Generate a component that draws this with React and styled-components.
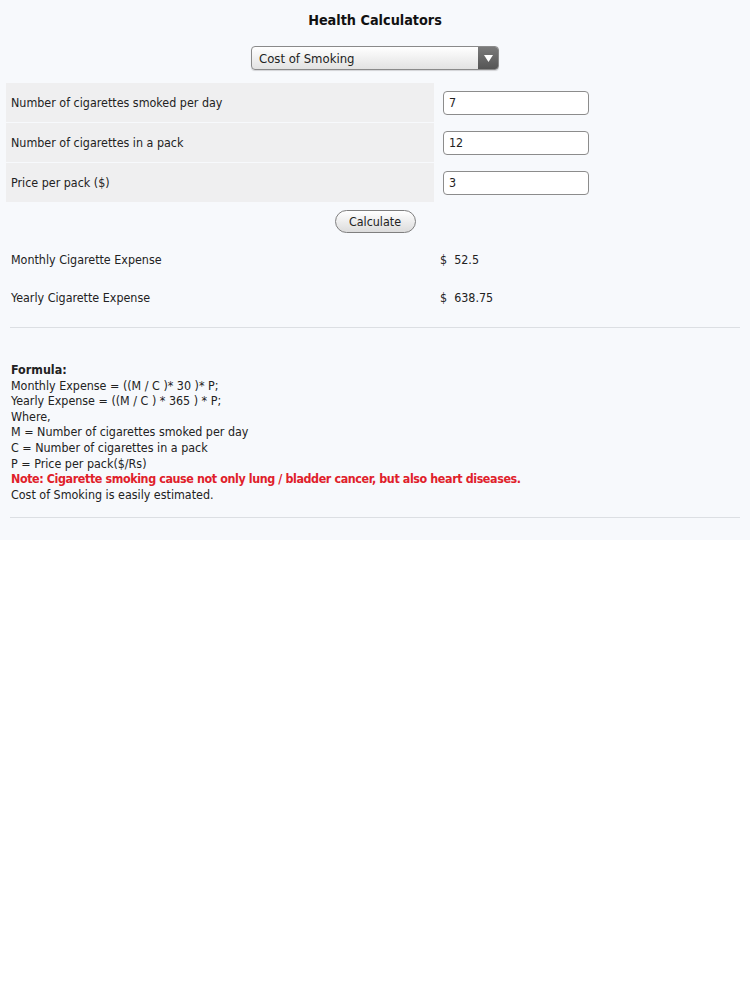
import React from "react";
import styled, { createGlobalStyle } from "styled-components";

const GlobalStyle = createGlobalStyle`
  html, body {
    margin: 0;
    padding: 0;
    background: #ffffff;
  }
  body {
    font-family: "DejaVu Sans Condensed", "DejaVu Sans", sans-serif;
    color: #222;
  }
`;

const Page = styled.div`
  background: #f7f9fc;
  padding: 10px 6px 22px 6px;
`;

const Title = styled.h1`
  margin: 0;
  text-align: center;
  font-size: 14.3px;
  font-weight: bold;
  color: #111;
  line-height: 20px;
`;

const SelectRow = styled.div`
  display: flex;
  justify-content: center;
  margin-top: 16px;
  margin-bottom: 13px;
`;

const SelectBox = styled.div`
  width: 248px;
  height: 24px;
  box-sizing: border-box;
  display: flex;
  align-items: stretch;
  border: 1px solid #8a8a8a;
  border-radius: 4px;
  overflow: hidden;
  background: linear-gradient(#ffffff, #e2e2e2);
  box-shadow: 0 1px 1px rgba(0, 0, 0, 0.15);
`;

const SelectText = styled.div`
  flex: 1;
  display: flex;
  align-items: center;
  padding-left: 7px;
  font-size: 13px;
  color: #222;
`;

const SelectArrow = styled.div`
  width: 20px;
  background: linear-gradient(#7a7a7a, #555);
  display: flex;
  align-items: center;
  justify-content: center;
`;

const Table = styled.div`
  display: flex;
  flex-direction: column;
  gap: 1px;
`;

const Row = styled.div`
  display: grid;
  grid-template-columns: 428px 1fr;
  height: 39px;
`;

const LabelCell = styled.div`
  background: #efeff0;
  display: flex;
  align-items: center;
  padding-left: 5px;
  font-size: 12.4px;
`;

const InputCell = styled.div`
  display: flex;
  align-items: center;
  padding-left: 9px;
`;

const Input = styled.input`
  width: 146px;
  height: 24px;
  box-sizing: border-box;
  border: 1px solid #8c8c8c;
  border-radius: 4px;
  background: #fff;
  padding: 0 5px;
  font-family: inherit;
  font-size: 12.4px;
  color: #222;
  outline: none;
`;

const ButtonRow = styled.div`
  display: flex;
  justify-content: center;
  margin-top: 8px;
`;

const Button = styled.button`
  width: 81px;
  height: 23px;
  border: 1px solid #7f7f7f;
  border-radius: 12px;
  background: linear-gradient(#ffffff, #dcdcdc);
  font-family: inherit;
  font-size: 12.4px;
  color: #222;
  padding: 0;
`;

const Results = styled.div`
  margin-top: 17px;
  display: flex;
  flex-direction: column;
  gap: 18px;
`;

const ResultRow = styled.div`
  display: grid;
  grid-template-columns: 429px 1fr;
  font-size: 12.4px;
  line-height: 20px;
  padding-left: 5px;
`;

const Divider = styled.hr`
  border: none;
  border-top: 1px solid #dcdfe3;
  margin: ${(p) => p.$top}px 4px 0 4px;
`;

const Formula = styled.div`
  margin-top: 34px;
  padding-left: 5px;
  font-size: 12.4px;
  line-height: 15.6px;
`;

const Bold = styled.div`
  font-weight: bold;
`;

const Note = styled.div`
  color: #e0202a;
  font-weight: bold;
  letter-spacing: -0.4px;
`;

const rows = [
  { label: "Number of cigarettes smoked per day", value: "7" },
  { label: "Number of cigarettes in a pack", value: "12" },
  { label: "Price per pack ($)", value: "3" },
];

export default function App() {
  return (
    <>
      <GlobalStyle />
      <Page>
        <Title>Health Calculators</Title>
        <SelectRow>
          <SelectBox>
            <SelectText>Cost of Smoking</SelectText>
            <SelectArrow>
              <svg width="9" height="7" viewBox="0 0 9 7">
                <polygon points="0,0 9,0 4.5,7" fill="#fff" />
              </svg>
            </SelectArrow>
          </SelectBox>
        </SelectRow>
        <Table>
          {rows.map((r) => (
            <Row key={r.label}>
              <LabelCell>{r.label}</LabelCell>
              <InputCell>
                <Input defaultValue={r.value} />
              </InputCell>
            </Row>
          ))}
        </Table>
        <ButtonRow>
          <Button>Calculate</Button>
        </ButtonRow>
        <Results>
          <ResultRow>
            <span>Monthly Cigarette Expense</span>
            <span>$&nbsp; 52.5</span>
          </ResultRow>
          <ResultRow>
            <span>Yearly Cigarette Expense</span>
            <span>$&nbsp; 638.75</span>
          </ResultRow>
        </Results>
        <Divider $top={19} />
        <Formula>
          <Bold>Formula:</Bold>
          <div>Monthly Expense = ((M / C )* 30 )* P;</div>
          <div>Yearly Expense = ((M / C ) * 365 ) * P;</div>
          <div>Where,</div>
          <div>M = Number of cigarettes smoked per day</div>
          <div>C = Number of cigarettes in a pack</div>
          <div>P = Price per pack($/Rs)</div>
          <Note>Note: Cigarette smoking cause not only lung / bladder cancer, but also heart diseases.</Note>
          <div>Cost of Smoking is easily estimated.</div>
        </Formula>
        <Divider $top={15} />
      </Page>
    </>
  );
}
